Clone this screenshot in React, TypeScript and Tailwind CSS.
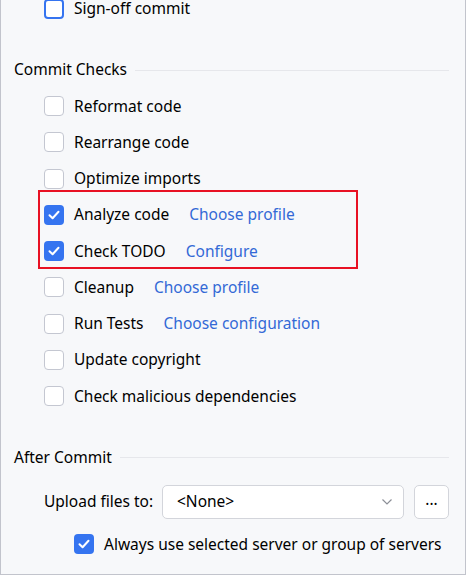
import React from "react";

const font = { fontFamily: '"Noto Sans", "Segoe UI", sans-serif' };

function Check({ checked, focused }: { checked?: boolean; focused?: boolean }) {
  if (checked) {
    return (
      <div className="w-[20px] h-[20px] rounded-[4px] bg-[#3574f0] flex items-center justify-center shrink-0">
        <svg width="14" height="14" viewBox="0 0 14 14" fill="none">
          <path d="M2.5 7.2 L5.6 10.2 L11.5 3.8" stroke="white" strokeWidth="2" strokeLinecap="round" strokeLinejoin="round" />
        </svg>
      </div>
    );
  }
  if (focused) {
    return <div className="w-[20px] h-[20px] rounded-[4px] bg-white border-2 border-[#3574f0] shrink-0" />;
  }
  return <div className="w-[20px] h-[20px] rounded-[4px] bg-white border border-[#c4c7d1] shrink-0" />;
}

function Row({ label, link, checked }: { label: string; link?: string; checked?: boolean }) {
  return (
    <div className="h-[36.25px] flex items-center pl-[43px]">
      <Check checked={checked} />
      <span className="ml-[10px] text-[#000000] whitespace-nowrap">{label}</span>
      {link && <span className="ml-[20px] text-[#3369d6] whitespace-nowrap">{link}</span>}
    </div>
  );
}

function Header({ title }: { title: string }) {
  return (
    <div className="h-[36px] flex items-center pl-[13px] pr-[16px]">
      <span className="text-[#000000] whitespace-nowrap">{title}</span>
      <div className="flex-1 ml-[8px] h-px bg-[#e6e7eb]" />
    </div>
  );
}

export default function App() {
  return (
    <div
      className="relative w-[466px] h-[575px] bg-[#f7f8fa] border-l border-r border-b border-[#c2c4cc] overflow-hidden text-[15.5px]"
      style={font}
    >
      <div className="flex flex-col -mt-[9px]">
        <div className="h-[35px] flex items-center pl-[43px]">
          <Check focused />
          <span className="ml-[10px] text-black whitespace-nowrap">Sign-off commit</span>
        </div>
        <div className="h-[26px]" />
        <Header title="Commit Checks" />
        <Row label="Reformat code" />
        <Row label="Rearrange code" />
        <Row label="Optimize imports" />
        <Row label="Analyze code" link="Choose profile" checked />
        <Row label="Check TODO" link="Configure" checked />
        <Row label="Cleanup" link="Choose profile" />
        <Row label="Run Tests" link="Choose configuration" />
        <Row label="Update copyright" />
        <Row label="Check malicious dependencies" />
        <div className="h-[25px]" />
        <Header title="After Commit" />
        <div className="h-[53px] flex items-center pl-[43px]">
          <span className="w-[109px] shrink-0 text-black whitespace-nowrap">Upload files to:</span>
          <div className="ml-[9px] w-[242px] h-[34px] shrink-0 bg-white border border-[#d3d5db] rounded-[5px] flex items-center pl-[14px] pr-[10px]">
            <span className="flex-1 text-black">&lt;None&gt;</span>
            <svg width="12" height="8" viewBox="0 0 12 8" fill="none">
              <path d="M1.5 1.5 L6 6 L10.5 1.5" stroke="#8c8f97" strokeWidth="1.2" />
            </svg>
          </div>
          <div className="ml-[10px] w-[35px] h-[34px] shrink-0 bg-white border border-[#d3d5db] rounded-[5px] flex items-center justify-center text-black leading-none pb-[4px]">
            ...
          </div>
        </div>
        <div className="h-[32px] flex items-center pl-[73px]">
          <Check checked />
          <span className="ml-[10px] text-black whitespace-nowrap">Always use selected server or group of servers</span>
        </div>
      </div>
      <div className="absolute left-[37px] top-[190px] w-[320px] h-[79px] border-2 border-[#e81123]" />
    </div>
  );
}
